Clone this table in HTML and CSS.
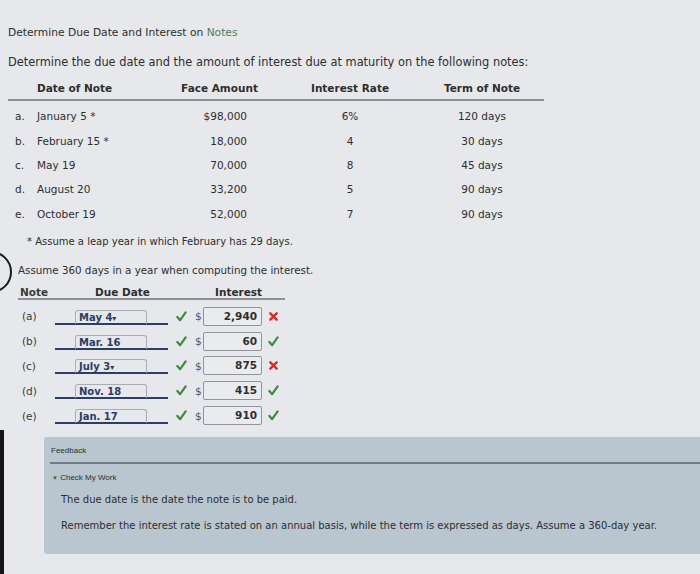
FILE: index.html
```html
<!DOCTYPE html>
<html>
<head>
<meta charset="utf-8">
<link rel="stylesheet" href="styles.css">
</head>
<body>
<div class="page">
  <div class="edge"></div>
  <div class="arc"></div>

  <h1 class="title">Determine Due Date and Interest on <span class="green">Notes</span></h1>
  <p class="intro">Determine the due date and the amount of interest due at maturity on the following notes:</p>

  <div class="notes">
    <div class="nrow head">
      <span></span>
      <span class="c-date">Date of Note</span>
      <span class="c-amt h-amt">Face Amount</span>
      <span class="c-rate">Interest Rate</span>
      <span class="c-term">Term of Note</span>
    </div>
    <div class="nrow"><span class="c-let">a.</span><span class="c-date">January 5 *</span><span class="c-amt">$98,000</span><span class="c-rate">6%</span><span class="c-term">120 days</span></div>
    <div class="nrow"><span class="c-let">b.</span><span class="c-date">February 15 *</span><span class="c-amt">18,000</span><span class="c-rate">4</span><span class="c-term">30 days</span></div>
    <div class="nrow"><span class="c-let">c.</span><span class="c-date">May 19</span><span class="c-amt">70,000</span><span class="c-rate">8</span><span class="c-term">45 days</span></div>
    <div class="nrow"><span class="c-let">d.</span><span class="c-date">August 20</span><span class="c-amt">33,200</span><span class="c-rate">5</span><span class="c-term">90 days</span></div>
    <div class="nrow"><span class="c-let">e.</span><span class="c-date">October 19</span><span class="c-amt">52,000</span><span class="c-rate">7</span><span class="c-term">90 days</span></div>
  </div>

  <p class="foot">* Assume a leap year in which February has 29 days.</p>
  <p class="assume">Assume 360 days in a year when computing the interest.</p>

  <div class="answers">
    <div class="arow ahead">
      <span class="a-note">Note</span>
      <span class="h-due">Due Date</span>
      <span></span><span></span>
      <span class="a-int">Interest</span>
      <span></span>
    </div>
    <div class="arow">
      <span class="a-note">(a)</span>
      <span class="a-due"><span class="sel">May 4<span class="caret">&#9662;</span></span></span>
      <span class="mark"><svg viewBox="0 0 12 12"><path class="ok" d="M1.5 6.5 L4.5 10 L10.5 1.5"/></svg></span>
      <span class="dol">$</span>
      <span class="box">2,940</span>
      <span class="mark"><svg viewBox="0 0 12 12"><path class="bad" d="M2.5 2.5 L9.5 9.5 M9.5 2.5 L2.5 9.5"/></svg></span>
    </div>
    <div class="arow">
      <span class="a-note">(b)</span>
      <span class="a-due"><span class="sel">Mar. 16</span></span>
      <span class="mark"><svg viewBox="0 0 12 12"><path class="ok" d="M1.5 6.5 L4.5 10 L10.5 1.5"/></svg></span>
      <span class="dol">$</span>
      <span class="box">60</span>
      <span class="mark"><svg viewBox="0 0 12 12"><path class="ok" d="M1.5 6.5 L4.5 10 L10.5 1.5"/></svg></span>
    </div>
    <div class="arow">
      <span class="a-note">(c)</span>
      <span class="a-due"><span class="sel">July 3<span class="caret">&#9662;</span></span></span>
      <span class="mark"><svg viewBox="0 0 12 12"><path class="ok" d="M1.5 6.5 L4.5 10 L10.5 1.5"/></svg></span>
      <span class="dol">$</span>
      <span class="box">875</span>
      <span class="mark"><svg viewBox="0 0 12 12"><path class="bad" d="M2.5 2.5 L9.5 9.5 M9.5 2.5 L2.5 9.5"/></svg></span>
    </div>
    <div class="arow">
      <span class="a-note">(d)</span>
      <span class="a-due"><span class="sel">Nov. 18</span></span>
      <span class="mark"><svg viewBox="0 0 12 12"><path class="ok" d="M1.5 6.5 L4.5 10 L10.5 1.5"/></svg></span>
      <span class="dol">$</span>
      <span class="box">415</span>
      <span class="mark"><svg viewBox="0 0 12 12"><path class="ok" d="M1.5 6.5 L4.5 10 L10.5 1.5"/></svg></span>
    </div>
    <div class="arow">
      <span class="a-note">(e)</span>
      <span class="a-due"><span class="sel">Jan. 17</span></span>
      <span class="mark"><svg viewBox="0 0 12 12"><path class="ok" d="M1.5 6.5 L4.5 10 L10.5 1.5"/></svg></span>
      <span class="dol">$</span>
      <span class="box">910</span>
      <span class="mark"><svg viewBox="0 0 12 12"><path class="ok" d="M1.5 6.5 L4.5 10 L10.5 1.5"/></svg></span>
    </div>
  </div>

  <div class="feedback">
    <div class="fb-title">Feedback</div>
    <div class="fb-check"><span class="tri">&#9660;</span> Check My Work</div>
    <p class="fb-text">The due date is the date the note is to be paid.</p>
    <p class="fb-text">Remember the interest rate is stated on an annual basis, while the term is expressed as days. Assume a 360-day year.</p>
  </div>
</div>
</body>
</html>
```

FILE: styles.css
```css
* { box-sizing: border-box; }

body {
  margin: 0;
  background: #e6e8eb;
  font-family: "DejaVu Sans", Verdana, sans-serif;
  font-size: 10.5px;
  color: #2e2e2e;
}

.page {
  position: relative;
  width: 700px;
  height: 574px;
  overflow: hidden;
  padding-top: 25px;
}

.edge {
  position: absolute;
  left: 0;
  top: 430px;
  width: 4px;
  height: 150px;
  background: #151515;
}

.arc {
  position: absolute;
  left: -30px;
  top: 251px;
  width: 42px;
  height: 42px;
  border: 2px solid #1a1a1a;
  border-radius: 50%;
}

.title {
  margin: 0 0 0 8px;
  font-size: 10.7px;
  font-weight: normal;
  line-height: 16px;
}

.green { color: #4d7d5c; }

.intro {
  margin: 13px 0 0 8px;
  font-size: 11.4px;
  line-height: 16px;
}

/* top notes table */
.notes {
  margin: 12px 0 0 8px;
  width: 536px;
}

.nrow {
  display: grid;
  grid-template-columns: 29px 110px 113px 40px 100px 32px 100px;
  height: 24.4px;
  align-items: center;
}

.nrow > span:nth-child(4) { grid-column: 5; }
.nrow > span:nth-child(5) { grid-column: 7; }

.head {
  height: 19px;
  align-items: start;
  font-weight: bold;
  border-bottom: 2px solid #8d9195;
  margin-bottom: 3px;
}

.c-let { padding-left: 7px; }
.c-amt { text-align: right; padding-right: 13px; }
.h-amt { padding-right: 2px; }
.c-rate, .c-term { text-align: center; }

.foot {
  margin: 8px 0 0 27px;
  font-size: 10px;
  line-height: 16px;
}

.assume {
  margin: 12px 0 0 18px;
  font-size: 10.3px;
  line-height: 16px;
}

/* answers table */
.answers {
  margin: 8px 0 0 18px;
  width: 267px;
}

.arow {
  display: grid;
  grid-template-columns: 37px 113px 27px 8px 59px 23px;
  height: 24.8px;
  align-items: center;
}

.ahead {
  height: 14px;
  align-items: start;
  font-weight: bold;
  border-bottom: 2px solid #8d9195;
  margin-bottom: 4px;
}

.ahead .a-note { padding-left: 2px; }
.h-due { padding-left: 40px; }
.ahead .a-int { padding-left: 12px; }

.a-note { padding-left: 4px; color: #3a3a3a; }

.a-due {
  height: 15px;
  border-bottom: 2px solid #2c3d66;
  margin-top: 2px;
}

.sel {
  display: block;
  margin-left: 20px;
  width: 72px;
  height: 14px;
  border: 1px solid #a9adb3;
  border-bottom: none;
  border-radius: 3px 3px 0 0;
  padding-left: 3px;
  font-weight: bold;
  font-size: 10px;
  line-height: 13px;
  color: #2c3d66;
}

.caret { font-size: 8px; }

.mark {
  display: flex;
  justify-content: center;
}

.mark svg {
  width: 11px;
  height: 11px;
}

.ok {
  fill: none;
  stroke: #3d8b3d;
  stroke-width: 2.4;
  stroke-linecap: round;
  stroke-linejoin: round;
}

.bad {
  fill: none;
  stroke: #d92a2a;
  stroke-width: 2.6;
  stroke-linecap: round;
}

.dol { color: #555; }

.box {
  height: 19px;
  border: 1px solid #8f959b;
  border-radius: 2px;
  background: #e9ebee;
  text-align: right;
  padding-right: 4px;
  font-weight: bold;
  line-height: 17px;
}

/* feedback */
.feedback {
  margin: 9px 0 0 44px;
  width: 660px;
  height: 117px;
  background: #b9c5cf;
  border-radius: 3px;
  padding: 8px 0 0 6px;
  font-family: "Liberation Sans", Arial, sans-serif;
}

.fb-title {
  font-size: 8px;
  line-height: 12px;
  padding-left: 1px;
  padding-bottom: 5px;
  border-bottom: 2px solid #6f7c87;
}

.fb-check {
  font-size: 8px;
  line-height: 12px;
  margin-top: 8px;
  padding-left: 2px;
}

.tri { font-size: 6px; color: #555; }

.fb-text {
  margin: 9px 0 0 11px;
  font-family: "DejaVu Sans", Verdana, sans-serif;
  font-size: 10px;
  line-height: 14px;
}

.fb-text + .fb-text { margin-top: 12px; }
```
